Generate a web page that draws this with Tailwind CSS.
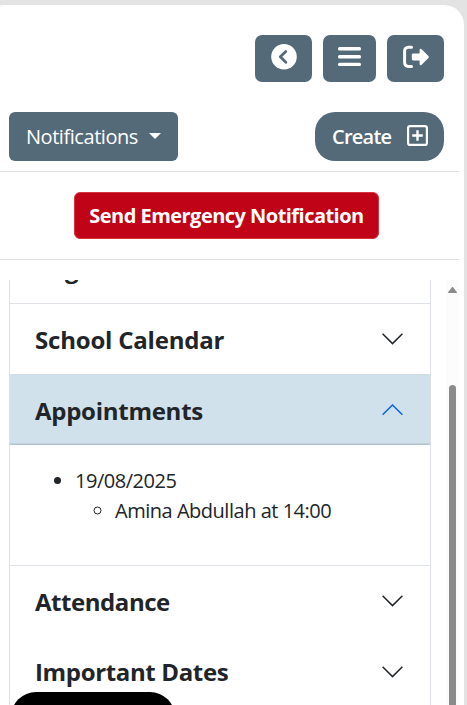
<!DOCTYPE html>
<html lang="en">
<head>
<meta charset="utf-8">
<title>School Portal</title>
<script src="https://cdn.jsdelivr.net/npm/@tailwindcss/browser@4"></script>
</head>
<body class="h-[705px] overflow-hidden bg-[#e3e3e3] pt-[5px] font-['Open_Sans','Noto_Sans',sans-serif] text-[#212529]">
<main class="relative -ml-4 flex h-[700px] w-[480px] flex-col overflow-hidden rounded-t-[20px] bg-white pl-4">
  <nav class="flex h-[107px] shrink-0 items-start justify-end gap-[11px] pt-[30px] pr-5 text-white">
    <button aria-label="Back" class="flex h-[47px] w-[57px] justify-center rounded-[7px] bg-[#546a79] pt-[9px]">
      <svg class="h-[26px] w-[26px]" viewBox="0 0 26 26"><circle cx="13" cy="12.8" r="12.8" fill="#fff"/><path d="M14.8 7.6 9.3 12.8l5.5 5.4" fill="none" stroke="#546a79" stroke-width="2.8" stroke-linecap="round" stroke-linejoin="round"/></svg>
    </button>
    <button aria-label="Menu" class="flex h-[47px] w-[53px] justify-center rounded-[7px] bg-[#546a79] pt-[12px]">
      <svg class="h-5 w-[23px]" viewBox="0 0 23 20" fill="#fff"><rect y="0" width="23" height="3.6" rx="1.5"/><rect y="8" width="23" height="3.4" rx="1.5"/><rect y="15.7" width="23" height="3.4" rx="1.5"/></svg>
    </button>
    <button aria-label="Sign out" class="flex h-[47px] w-[57px] justify-center rounded-[7px] bg-[#546a79] pt-[10px]">
      <svg class="h-6 w-[27px]" viewBox="0 0 27 24"><path d="M9.5 2.3H6.2A3.6 3.6 0 0 0 2.6 6v11.8a3.6 3.6 0 0 0 3.6 3.6h3.3" fill="none" stroke="#fff" stroke-width="3" stroke-linecap="round"/><path d="M11.3 8.6h6.3V4.9c0-1 1-1.5 1.8-.8l7 6.9c.6.6.6 1.4 0 2l-7 6.9c-.8.7-1.8.2-1.8-.8v-3.7h-6.3c-.9 0-1.5-.6-1.5-1.4V10c0-.8.6-1.4 1.5-1.4Z" fill="#fff"/></svg>
    </button>
  </nav>

  <div class="mr-[5px] flex h-[60px] shrink-0 items-start justify-between border-b border-[#dee2e6] pr-[15px] pl-[9px] text-[20px] leading-[49px] text-white">
    <button class="flex h-[49px] w-[169px] items-center rounded-[6px] bg-[#546a79] pl-[17px]"><span class="w-[112px] text-left tracking-[-0.45px]">Notifications</span><span class="ml-[11px] -mt-[2px] border-x-[6px] border-t-[6px] border-x-transparent border-t-white"></span></button>
    <button class="flex h-[49px] w-[129px] items-center rounded-[20px] bg-[#546a79] pl-[17px] font-semibold"><span class="w-[75px] text-left tracking-[-0.75px]">Create</span>
      <svg class="-mt-[2px] h-[21px] w-[21px]" viewBox="0 0 21 21" fill="none" stroke="#fff" stroke-width="2.2"><rect x="1.1" y="1.1" width="18.8" height="18.8" rx="2"/><path d="M10.5 5.2v10.6M5.2 10.5h10.6" stroke-width="2.4"/></svg>
    </button>
  </div>

  <div class="mr-[5px] flex h-[88px] shrink-0 justify-center border-b border-[#dee2e6] pt-5 pr-[6px]">
    <button class="h-[47px] w-[305px] rounded-[6px] border border-[#d83440] bg-[#c00316] text-[20px] leading-[46px] font-bold tracking-[-0.53px] whitespace-nowrap text-white">Send Emergency Notification</button>
  </div>

  <div class="mt-5 mr-[5px] flex h-[425px] shrink-0 justify-between overflow-hidden pl-[9px]">
    <section class="h-[480px] w-[422px] border-x border-[#dee2e6]">
      <div class="-mt-[47px] flex h-[71px] items-center justify-between border-b border-[#dee2e6] pt-px pr-[27px] pl-[25px]">
        <h2 class="text-[24px] font-bold">Registers</h2>
      </div>
      <div class="flex h-[70px] items-center justify-between pr-[27px] pl-[25px]">
        <h2 class="pt-[2px] text-[24px] leading-[30px] font-bold tracking-[-0.2px]">School Calendar</h2>
        <svg class="h-3 w-[21px]" viewBox="0 0 21 12" fill="none" stroke="#212529" stroke-width="1.5"><path d="m.6.8 9.9 9.8L20.4.8"/></svg>
      </div>
      <div class="flex h-[71px] items-center justify-between border-y border-t-[#d5dde2] border-b-[#b3c4cf] bg-[#d1e1eb] pr-[27px] pl-[25px] shadow-[inset_0_-1px_0_#c0d0da]">
        <h2 class="pt-[2px] text-[24px] leading-[30px] font-bold tracking-[-0.27px]">Appointments</h2>
        <svg class="h-3 w-[21px]" viewBox="0 0 21 12" fill="none" stroke="#0c63e4" stroke-width="1.5"><path d="m.6 10.8 9.9-9.8 9.9 9.8"/></svg>
      </div>
      <div class="h-[121px] border-b border-[#dee2e6] pt-[21px] pl-[25px]">
        <ul class="list-disc pl-10 text-[20px] leading-[30px] tracking-[-0.48px]">
          <li>19/08/2025
            <ul class="list-[circle] pl-10"><li>Amina Abdullah at 14:00</li></ul>
          </li>
        </ul>
      </div>
      <div class="flex h-[70px] items-center justify-between pr-[27px] pl-[25px]">
        <h2 class="pt-[2px] text-[24px] leading-[30px] font-bold tracking-[-0.45px]">Attendance</h2>
        <svg class="h-3 w-[21px]" viewBox="0 0 21 12" fill="none" stroke="#212529" stroke-width="1.5"><path d="m.6.8 9.9 9.8L20.4.8"/></svg>
      </div>
      <div class="flex h-[71px] items-center justify-between pr-[27px] pl-[25px]">
        <h2 class="text-[24px] leading-[30px] font-bold tracking-[-0.35px]">Important Dates</h2>
        <svg class="h-3 w-[21px]" viewBox="0 0 21 12" fill="none" stroke="#212529" stroke-width="1.5"><path d="m.6.8 9.9 9.8L20.4.8"/></svg>
      </div>
    </section>
    <div class="flex w-[13px] flex-col items-center bg-[#fcfcfc] pt-[7px]">
      <svg class="h-[6px] w-[9px] shrink-0" viewBox="0 0 9 6"><path d="M3.7.4a1 1 0 0 1 1.6 0L8.8 5a.6.6 0 0 1-.5 1H.7a.6.6 0 0 1-.5-1Z" fill="#8b8b8b"/></svg>
      <div class="mt-[92px] h-[400px] w-[7px] shrink-0 rounded-full bg-[#8b8b8b]"></div>
    </div>
  </div>
  <div class="absolute top-[687px] left-[27px] h-[50px] w-[164px] rounded-[25px] bg-black"></div>
</main>
</body>
</html>
